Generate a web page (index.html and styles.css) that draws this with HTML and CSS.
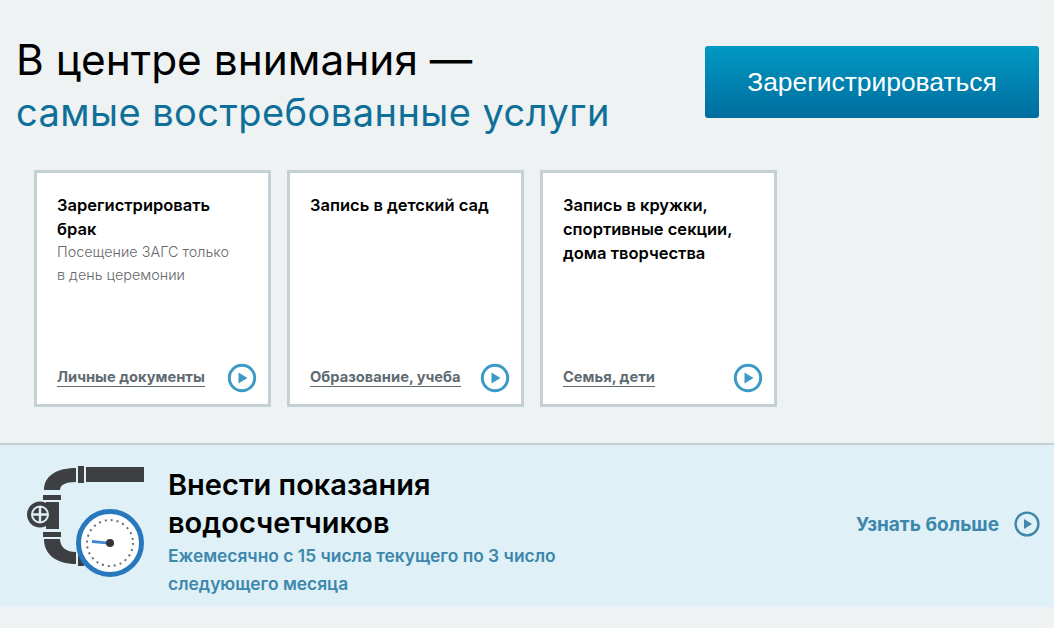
FILE: index.html
```html
<!DOCTYPE html>
<html lang="ru">
<head>
    <meta charset="UTF-8">
    <title>В центре внимания</title>
    <link rel="stylesheet" href="styles.css">
</head>
<body>
<div class="top">
    <h1 class="title"><span class="title-main">В центре внимания —</span><span class="title-sub">самые востребованные услуги</span></h1>
    <a class="reg-btn" href="#">Зарегистрироваться</a>
</div>
<ul class="cards">
    <li class="card">
        <div class="card-head">Зарегистрировать брак</div>
        <div class="card-text">Посещение ЗАГС только<br>в день церемонии</div>
        <div class="card-foot">
            <a class="card-link" href="#">Личные документы</a>
            <svg class="play" viewBox="0 0 30 30"><circle cx="15" cy="15" r="12.7" fill="none" stroke="#3c9ac7" stroke-width="3"/><path d="M11.5 9.5 20.5 15 11.5 20.5z" fill="#3c9ac7"/></svg>
        </div>
    </li>
    <li class="card">
        <div class="card-head">Запись в детский сад</div>
        <div class="card-foot">
            <a class="card-link" href="#">Образование, учеба</a>
            <svg class="play" viewBox="0 0 30 30"><circle cx="15" cy="15" r="12.7" fill="none" stroke="#3c9ac7" stroke-width="3"/><path d="M11.5 9.5 20.5 15 11.5 20.5z" fill="#3c9ac7"/></svg>
        </div>
    </li>
    <li class="card">
        <div class="card-head">Запись в кружки, спортивные секции, дома творчества</div>
        <div class="card-foot">
            <a class="card-link" href="#">Семья, дети</a>
            <svg class="play" viewBox="0 0 30 30"><circle cx="15" cy="15" r="12.7" fill="none" stroke="#3c9ac7" stroke-width="3"/><path d="M11.5 9.5 20.5 15 11.5 20.5z" fill="#3c9ac7"/></svg>
        </div>
    </li>
</ul>
<div class="band">
    <svg class="pipe" viewBox="0 0 118 112">
        <!-- труба -->
        <path d="M17 24C17 11 28 2 49 2V16C38 16 33 19 33 24z" fill="#3d3f43"/>
        <rect x="51" y="0" width="6" height="17" fill="#3d3f43"/>
        <rect x="59" y="1" width="58" height="15" fill="#3d3f43"/>
        <rect x="16" y="29" width="18" height="5" fill="#3d3f43"/>
        <rect x="19" y="36" width="13" height="27" fill="#3d3f43"/>
        <rect x="16" y="66" width="18" height="5" fill="#3d3f43"/>
        <path d="M17 73C17 88 29 98 49 98V86C38 86 33 80 33 73z" fill="#3d3f43"/>
        <rect x="51" y="87" width="6" height="13" fill="#3d3f43"/>
        <!-- вентиль -->
        <circle cx="13" cy="48.500" r="13" fill="#3d3f43"/>
        <path d="M13 41V56M5.500 48.500H20.500" stroke="#dff0f6" stroke-width="2.400"/>
        <circle cx="13" cy="48.500" r="8" fill="none" stroke="#dff0f6" stroke-width="2"/>
        <!-- счетчик -->
        <circle cx="83" cy="77" r="31.500" fill="#fff" stroke="#2878bd" stroke-width="5"/>
        <circle cx="83" cy="77" r="23" fill="none" stroke="#6b6f75" stroke-width="2" stroke-dasharray="2 4.020"/>
        <path d="M65 74 83 76 83 78.500 65 77z" fill="#3b86d0"/>
        <circle cx="83" cy="77" r="4" fill="#33363b"/>
    </svg>
    <div class="band-body">
        <div class="band-title">Внести показания<br>водосчетчиков</div>
        <div class="band-text">Ежемесячно с 15 числа текущего по 3 число<br>следующего месяца</div>
    </div>
    <a class="more" href="#">Узнать больше
        <svg class="play-sm" viewBox="0 0 26 26"><circle cx="13" cy="13" r="11.400" fill="none" stroke="#3f87ab" stroke-width="2.400"/><path d="M10 8 18 13 10 18z" fill="#3f87ab"/></svg>
    </a>
</div>
</body>
</html>
```

FILE: styles.css
```css
html,body,div,ul,li,h1{margin:0;padding:0;}
ul{list-style-type:none;}
a{text-decoration:none;}
body{background:#eef2f3;font-family:Inter,"Noto Sans",sans-serif;color:#000;overflow:hidden;}

.top{display:flex;justify-content:space-between;align-items:flex-start;padding:34px 15px 0 16px;height:170px;box-sizing:border-box;}
.title{font-size:38px;line-height:52px;font-weight:400;}
.title span{display:block;}
.title-main{font-size:42.4px;}
.title-sub{color:#0e6f98;letter-spacing:.45px;}
.reg-btn{display:flex;align-items:center;justify-content:center;width:334px;height:72px;margin-top:12px;border-radius:3px;background:linear-gradient(#0099c3,#006d9f);color:#fff;font:26.4px "Liberation Sans",sans-serif;}

.cards{display:flex;gap:16px;padding-left:34px;}
.card{display:flex;flex-direction:column;width:237px;height:237px;box-sizing:border-box;border:3px solid #c5d0d5;background:#fff;padding:20px 11px 11px 20px;}
.card-head{font-size:16.5px;line-height:24px;font-weight:600;max-width:185px;}
.card-text{font-size:14.4px;line-height:23px;color:#68696c;font-weight:300;margin-top:-1px;}
.card-foot{display:flex;justify-content:space-between;align-items:center;margin-top:auto;}
.card-link{color:#5f6b72;font-size:14.7px;font-weight:700;line-height:17px;border-bottom:1px solid #5f6b72;}
.play{width:30px;height:30px;}

.band{display:flex;align-items:flex-start;margin-top:36px;height:164px;box-sizing:border-box;border-top:2px solid #c5cfd4;background:#dff0f6;padding:20px 14px 0 27px;}
.pipe{width:118px;height:112px;margin:1px 23px 0 0;}
.band-body{flex:1;padding-top:1px;}
.band-title{font-size:29px;line-height:38px;font-weight:600;}
.band-text{font-size:17.4px;line-height:28px;font-weight:600;color:#3d87ad;}
.more{display:flex;align-items:center;gap:15px;margin-top:46px;color:#3d87ad;font-size:19px;font-weight:700;}
.play-sm{width:26px;height:26px;}
```
